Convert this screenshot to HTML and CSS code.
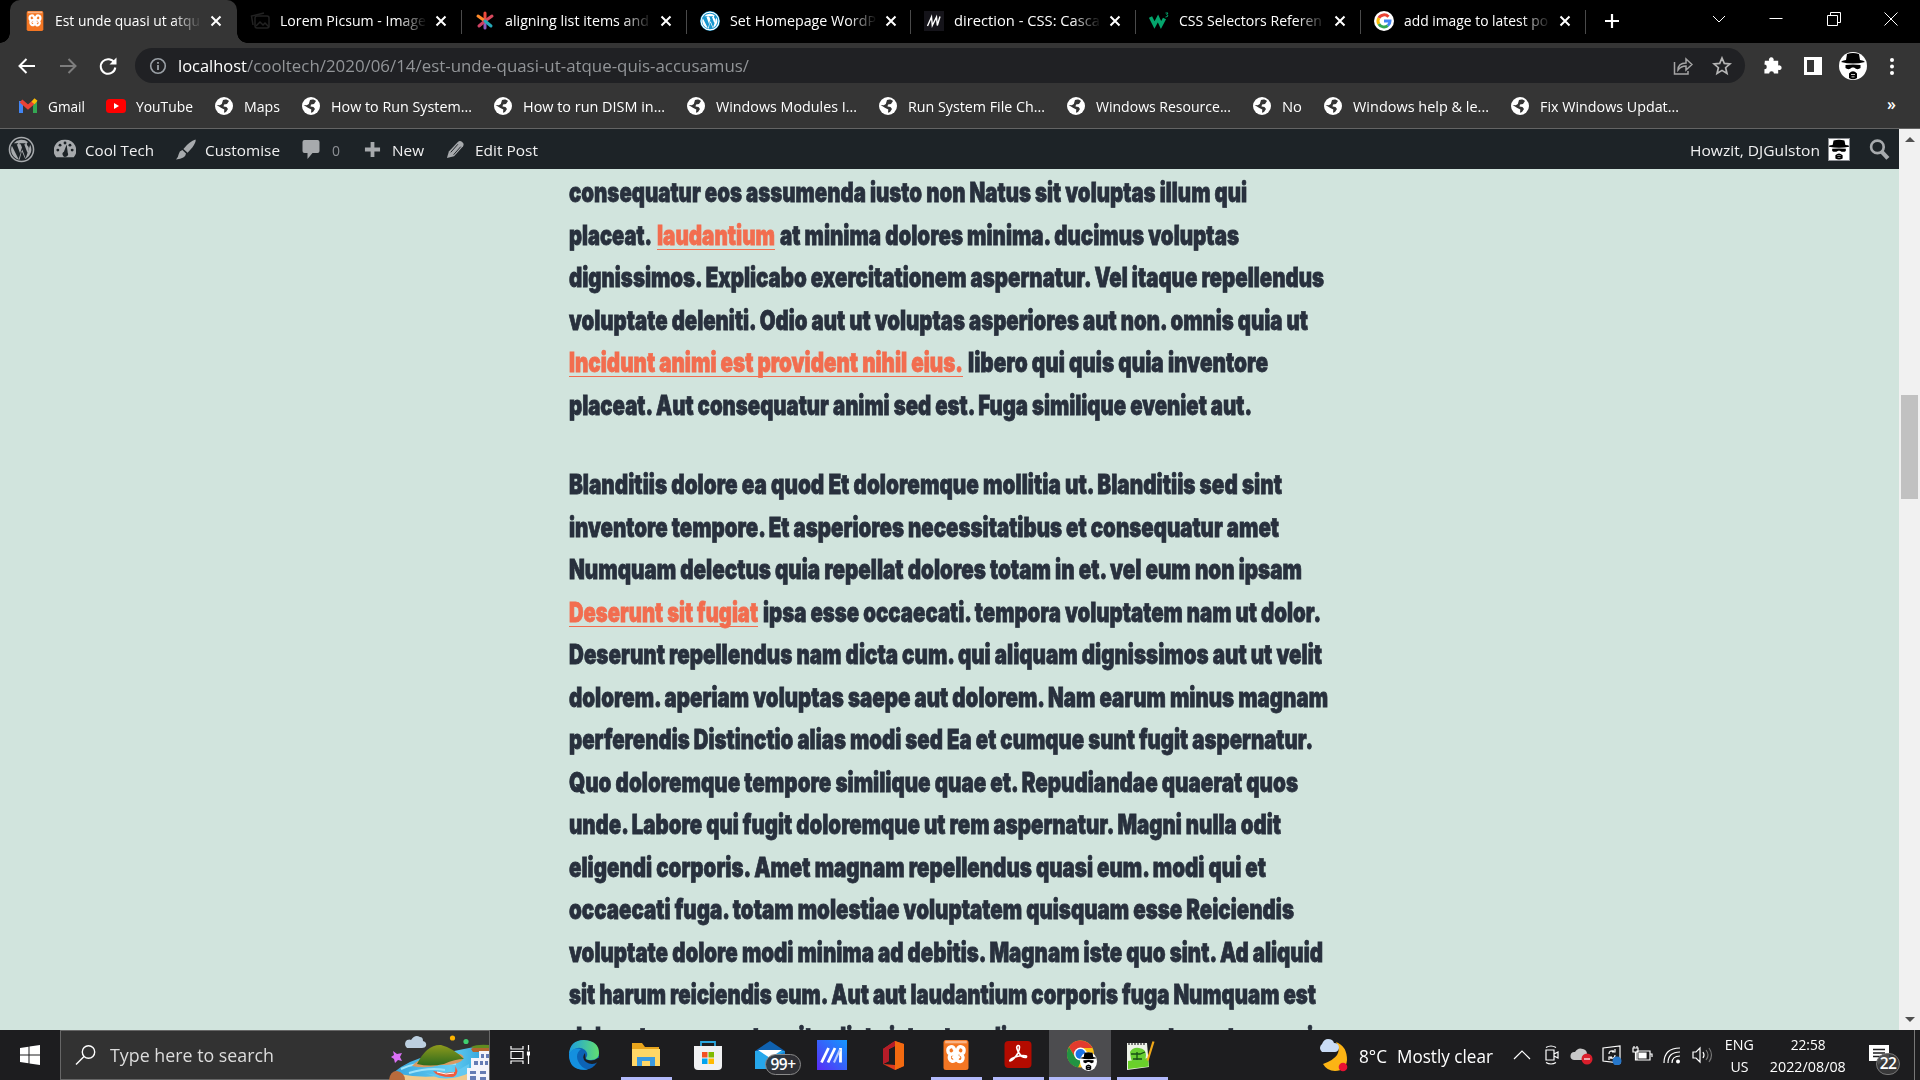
FILE: index.html
```
<!DOCTYPE html>
<html lang="en">
<head>
<meta charset="utf-8">
<title>Est unde quasi ut atque quis accusamus</title>
<link rel="stylesheet" href="styles.css">
</head>
<body>
<svg class="defs" aria-hidden="true">
  <symbol id="x" viewBox="0 0 12 12"><path d="M1.500 1.500l9 9M10.500 1.500l-9 9" stroke="#fff" stroke-width="2" fill="none"/></symbol>
  <symbol id="globe" viewBox="0 0 20 20"><circle cx="10" cy="10" r="9" fill="#fff"/><path d="M9 4c2-1 5-.5 6 1l-2 3-3 .5-.5 2 3 .5 1.500 2-2 3-2 .8.3-3.300-3-1.500L2.600 9l3.200.3 2-1.300z" fill="#353535"/></symbol>
  <symbol id="xampp" viewBox="0 0 30 36"><rect width="30" height="36" rx="3" fill="#f37623"/><path d="M2 1h26v3H2z" fill="#f9b384"/><path d="M13 17H9a4 4.500 0 1 1 4-6l2 3 2-3a4 4.500 0 1 1 4 6h-2a4 4.500 0 1 1-2 8l-2-3-2 3a4 4.500 0 1 1-4-8z" stroke="#fff" stroke-width="4" fill="#f37623"/><path d="M11 14l8 8M19 14l-8 8" stroke="#fff" stroke-width="4"/></symbol>
  <symbol id="wp" viewBox="0 0 28 28"><circle cx="14" cy="14" r="12.500" fill="none" stroke="currentColor" stroke-width="1.600"/><path d="M4 10l7 14 3-9 4 9 5-15a10.800 10.800 0 0 1-4.500 14.500L14.800 14 12 24.700A10.800 10.800 0 0 1 4 10z" fill="currentColor"/><path d="M6 7.500a10.800 10.800 0 0 1 15-1c-2.500.5-1.500 3 0 4.500 1 1.500.5 3-.8 6.500L16.800 8.500H18v-1h-6v1h1.200l1.300 3.500-2 6-3.400-9.500h1.400v-1z" fill="currentColor"/></symbol>
  <symbol id="heis" viewBox="0 0 28 28"><path d="M7 8L8 2Q14 0 20 2L21 8q4 .5 5 2-12 3-24 0 1-1.500 5-2z" fill="#000"/><path d="M6.500 13q7.500-1 15 0v3q-3 2.500-6.500-.5h-2q-3.500 3-6.500.5z" fill="#000"/><path d="M10 26v-4.500q4-4.500 8 0V26q-4 2.500-8 0z" fill="#000"/><path d="M12 22h4v.8h-4zM12.500 24.500h3v.8h-3z" fill="#fff"/></symbol>
</svg>

<header class="tabs">
  <div class="tab active"><svg class="fav"><use href="#xampp"/></svg><span class="title"><span class="fit" data-w="145">Est unde quasi ut atqu</span></span><svg class="close"><use href="#x"/></svg></div>
  <div class="tab"><svg class="fav" viewBox="0 0 20 20" fill="none" stroke="#222" stroke-width="1.500"><rect x="5" y="5" width="14" height="12" rx="2"/><path d="M3 14L1.500 5 14 2M6 15l4-4 3 3 2-2 4 4"/></svg><span class="title"><span class="fit" data-w="146">Lorem Picsum - Image</span></span><svg class="close"><use href="#x"/></svg></div>
  <div class="tab"><svg class="fav" viewBox="0 0 20 20" stroke-width="3" stroke-linecap="round"><path d="M10 2v8" stroke="#ec4a3c"/><path d="M10 10v7" stroke="#8c5cc0"/><path d="M3 5l7 5" stroke="#ff8a2a"/><path d="M17 5l-7 5" stroke="#d8495d"/><path d="M10 10l-6 5" stroke="#ce4264"/><path d="M10 10l6 5" stroke="#25a9b8"/></svg><span class="title"><span class="fit" data-w="144">aligning list items and</span></span><svg class="close"><use href="#x"/></svg></div>
  <div class="tab"><svg class="fav wpblue"><use href="#wp"/></svg><span class="title"><span class="fit" data-w="146">Set Homepage WordP</span></span><svg class="close"><use href="#x"/></svg></div>
  <div class="tab"><svg class="fav" viewBox="0 0 20 20"><path d="M0 0h20v20H0z" fill="#15141a"/><path d="M3.500 15L7.500 6l.8 8.500L12.500 6l.8 8.500L16 5.500" stroke="#fff" stroke-width="1.400" fill="none"/></svg><span class="title"><span class="fit" data-w="146">direction - CSS: Casca</span></span><svg class="close"><use href="#x"/></svg></div>
  <div class="tab"><svg class="fav" viewBox="0 0 20 20"><path d="M1.500 6l4 8 3.500-6.500 3 6.500 3.500-6.500" stroke="#04a56c" stroke-width="3.500" fill="none"/><path d="M16.500 2H19l-1.300 1.700Q19.500 4 18.500 5.500l-2 .5" stroke="#04a56c" stroke-width="1" fill="none"/></svg><span class="title"><span class="fit" data-w="143">CSS Selectors Referen</span></span><svg class="close"><use href="#x"/></svg></div>
  <div class="tab"><svg class="fav" viewBox="0 0 20 20"><circle cx="10" cy="10" r="10" fill="#fff"/><g fill="none" stroke-width="3"><path d="M14.500 5.800A6 6 0 0 0 4.800 7" stroke="#ea4335"/><path d="M4.800 7a6 6 0 0 0 0 6" stroke="#fbbc05"/><path d="M4.800 13a6 6 0 0 0 9 1.600" stroke="#34a853"/><path d="M13.800 14.600Q16 13 16 10h-6" stroke="#4285f4"/></g></svg><span class="title"><span class="fit" data-w="144">add image to latest po</span></span><svg class="close"><use href="#x"/></svg></div>
  <svg class="plus" viewBox="0 0 16 16"><path d="M8 1v14M1 8h14" stroke="#fff" stroke-width="2.200"/></svg>
  <div class="winctl">
    <svg viewBox="0 0 14 14"><path d="M1 4l6 6 6-6"/></svg>
    <svg viewBox="0 0 14 14"><path d="M.5 6.500h13"/></svg>
    <svg viewBox="0 0 14 14"><path d="M.5 3.500h10v10H.5zM3.500 3.500v-3h10v10h-3"/></svg>
    <svg viewBox="0 0 14 14"><path d="M.5.5l13 13M13.500.5l-13 13"/></svg>
  </div>
</header>

<nav class="toolbar">
  <svg class="tool" viewBox="0 0 20 20"><path d="M18 10H3M9.500 3L2.500 10l7 7" /></svg>
  <svg class="tool dim" viewBox="0 0 20 20"><path d="M2 10h15M10.500 3l7 7-7 7"/></svg>
  <svg class="tool" viewBox="0 0 20 20"><path d="M16.500 7A7.300 7.300 0 1 0 17.300 11.500"/><path d="M18.500 1.500v7h-7z" fill="#fff" stroke="none"/></svg>
  <div class="omnibox">
    <svg class="info" viewBox="0 0 18 18"><circle cx="9" cy="9" r="7.300" fill="none" stroke="#9aa0a6" stroke-width="1.600"/><path d="M9 8v5M9 5v1.800" stroke="#9aa0a6" stroke-width="1.800"/></svg>
    <span class="host fit" data-w="69">localhost</span><span class="path fit" data-w="502">/cooltech/2020/06/14/est-unde-quasi-ut-atque-quis-accusamus/</span>
    <svg class="share" viewBox="0 0 20 20" fill="none" stroke="#a5a5a5" stroke-width="1.500"><path d="M1.500 6v12H15v-3M5 14q0-7 8-7V3l6 5.500-6 5.500v-4q-5 0-8 4z"/></svg>
    <svg class="star" viewBox="0 0 20 20" fill="none" stroke="#b5b5b5" stroke-width="1.700"><path d="M10 2l2.300 5.400 5.700.5-4.400 3.800 1.400 5.800-5-3.100-5 3.100 1.400-5.800L2 7.900l5.700-.5z"/></svg>
  </div>
  <svg class="ext" viewBox="0 0 20 20"><path d="M2 5h4.500a2.500 2.500 0 1 1 4.500 0h5v5a2.500 2.500 0 1 1 0 4.500v4h-4.500a2.500 2.500 0 1 0-5 0H1.500v-4.500a2.500 2.500 0 1 0 0-5z" fill="#fff"/></svg>
  <svg class="side" viewBox="0 0 20 20"><path d="M1 1h18v18H1zM4 4v12h7V4z" fill="#fff" fill-rule="evenodd"/></svg>
  <svg class="me"><use href="#heis"/></svg>
  <svg class="dots" viewBox="0 0 6 20" fill="#fff"><circle cx="3" cy="4" r="2"/><circle cx="3" cy="10.500" r="2"/><circle cx="3" cy="17" r="2"/></svg>
</nav>

<nav class="bookmarks">
  <a><svg viewBox="0 0 20 20" fill="none" stroke-width="4"><path d="M3 5v12" stroke="#4285f4"/><path d="M17 5v12" stroke="#34a853"/><path d="M3 5l7 6 7-6" stroke="#ea4335"/><path d="M15 7l3-3.500" stroke="#fbbc04"/></svg><span class="fit" data-w="37">Gmail</span></a>
  <a><svg viewBox="0 0 20 20"><rect y="3" width="20" height="14" rx="3.500" fill="#f00"/><path d="M8 7l5 3-5 3z" fill="#fff"/></svg><span class="fit" data-w="57">YouTube</span></a>
  <a><svg><use href="#globe"/></svg><span class="fit" data-w="36">Maps</span></a>
  <a><svg><use href="#globe"/></svg><span class="fit" data-w="141">How to Run System...</span></a>
  <a><svg><use href="#globe"/></svg><span class="fit" data-w="142">How to run DISM in...</span></a>
  <a><svg><use href="#globe"/></svg><span class="fit" data-w="141">Windows Modules I...</span></a>
  <a><svg><use href="#globe"/></svg><span class="fit" data-w="137">Run System File Ch...</span></a>
  <a><svg><use href="#globe"/></svg><span class="fit" data-w="135">Windows Resource...</span></a>
  <a><svg><use href="#globe"/></svg><span class="fit" data-w="20">No</span></a>
  <a><svg><use href="#globe"/></svg><span class="fit" data-w="136">Windows help &amp; le...</span></a>
  <a><svg><use href="#globe"/></svg><span class="fit" data-w="139">Fix Windows Updat...</span></a>
  <span class="more">»</span>
</nav>

<div class="viewport">
  <div class="page">
    <div class="adminbar">
      <svg class="wplogo"><use href="#wp"/></svg>
      <svg class="dash" viewBox="0 0 20 20"><path d="M10 1.500A9.800 9.800 0 0 0 2 17.500h16A9.800 9.800 0 0 0 10 1.500z" fill="currentColor"/><g fill="#1d2327"><circle cx="10" cy="4.500" r="1.300"/><circle cx="5.500" cy="6.500" r="1.300"/><circle cx="14.500" cy="6.500" r="1.300"/><circle cx="3.500" cy="11" r="1.300"/><circle cx="16.500" cy="11" r="1.300"/><path d="M11.500 6l1 7.500a2.500 2.500 0 1 1-3.500-1z"/></g></svg>
      <span class="fit cool" data-w="69">Cool Tech</span>
      <svg class="brush" viewBox="0 0 20 20" fill="currentColor"><path d="M19.500.5q1 2-3 7.500l-4.500 5-4-3.500Q14 2 19.500.5zM7 10.500l3.500 3.200Q10 18.500 1 19.500q2-2 2.500-5T7 10.500z"/></svg>
      <span class="fit cust" data-w="75">Customise</span>
      <svg class="comment" viewBox="0 0 18 20"><path d="M2.500 1h13Q17.500 1 17.500 3v9q0 2-2 2h-5L5.500 20v-6h-3q-2 0-2-2V3q0-2 2-2z" fill="currentColor"/></svg>
      <span class="fit zero" data-w="8">0</span>
      <svg class="add" viewBox="0 0 18 18"><path d="M9 1v16M1 9h16" stroke="currentColor" stroke-width="4"/></svg>
      <span class="fit new" data-w="32">New</span>
      <svg class="pencil" viewBox="0 0 20 20"><path d="M1 19l2-7L12.500 2Q14.500 0 17 2t1 4.500L8.500 17z" fill="currentColor"/><path d="M5 13l7.500-8.500M8 15.500L15.500 7" stroke="#1d2327"/></svg>
      <span class="fit edit" data-w="63">Edit Post</span>
      <span class="fit howzit" data-w="130">Howzit, DJGulston</span>
      <svg class="pic" viewBox="3 0 22 28" preserveAspectRatio="none"><use href="#heis" width="28" height="28"/></svg>
      <svg class="search" viewBox="0 0 20 20" fill="none" stroke="currentColor"><circle cx="8" cy="7.500" r="6" stroke-width="2.500"/><path d="M12 12l6 6.500" stroke-width="4"/></svg>
    </div>
    <article>
      <section>
        <p><span class="fit" data-w="678">consequatur eos assumenda iusto non Natus sit voluptas illum qui</span></p>
        <p><span class="fit" data-w="83">placeat.</span><a class="fit" data-w="118">laudantium</a><span class="fit" data-w="459">at minima dolores minima. ducimus voluptas</span></p>
        <p><span class="fit" data-w="755">dignissimos. Explicabo exercitationem aspernatur. Vel itaque repellendus</span></p>
        <p><span class="fit" data-w="739">voluptate deleniti. Odio aut ut voluptas asperiores aut non. omnis quia ut</span></p>
        <p><a class="fit" data-w="394">Incidunt animi est provident nihil eius.</a><span class="fit" data-w="300">libero qui quis quia inventore</span></p>
        <p><span class="fit" data-w="683">placeat. Aut consequatur animi sed est. Fuga similique eveniet aut.</span></p>
      </section>
      <section>
        <p><span class="fit" data-w="713">Blanditiis dolore ea quod Et doloremque mollitia ut. Blanditiis sed sint</span></p>
        <p><span class="fit" data-w="710">inventore tempore. Et asperiores necessitatibus et consequatur amet</span></p>
        <p><span class="fit" data-w="733">Numquam delectus quia repellat dolores totam in et. vel eum non ipsam</span></p>
        <p><a class="fit" data-w="189">Deserunt sit fugiat</a><span class="fit" data-w="558">ipsa esse occaecati. tempora voluptatem nam ut dolor.</span></p>
        <p><span class="fit" data-w="753">Deserunt repellendus nam dicta cum. qui aliquam dignissimos aut ut velit</span></p>
        <p><span class="fit" data-w="759">dolorem. aperiam voluptas saepe aut dolorem. Nam earum minus magnam</span></p>
        <p><span class="fit" data-w="744">perferendis Distinctio alias modi sed Ea et cumque sunt fugit aspernatur.</span></p>
        <p><span class="fit" data-w="729">Quo doloremque tempore similique quae et. Repudiandae quaerat quos</span></p>
        <p><span class="fit" data-w="712">unde. Labore qui fugit doloremque ut rem aspernatur. Magni nulla odit</span></p>
        <p><span class="fit" data-w="697">eligendi corporis. Amet magnam repellendus quasi eum. modi qui et</span></p>
        <p><span class="fit" data-w="725">occaecati fuga. totam molestiae voluptatem quisquam esse Reiciendis</span></p>
        <p><span class="fit" data-w="754">voluptate dolore modi minima ad debitis. Magnam iste quo sint. Ad aliquid</span></p>
        <p><span class="fit" data-w="747">sit harum reiciendis eum. Aut aut laudantium corporis fuga Numquam est</span></p>
        <p><span class="fit" data-w="744">dolor et consequatur sit a dicta iste et modi. cum consequatur aut eos qui</span></p>
      </section>
    </article>
  </div>
  <div class="scroll"><i class="up"></i><i class="thumb"></i><i class="down"></i></div>
</div>

<footer class="taskbar">
  <div class="start"><svg viewBox="0 0 20 20" fill="#fff"><path d="M0 3l8.500-1.300v7.800H0zM9.500 1.500L20 0v9.500H9.500zM0 10.500h8.500v7.800L0 17zM9.500 10.500H20V20L9.500 18.500z"/></svg></div>
  <div class="find">
    <svg class="mag" viewBox="0 0 20 20" fill="none" stroke="#fff" stroke-width="1.400"><circle cx="13" cy="7" r="6.200"/><path d="M8.500 11.500L.5 19.500"/></svg>
    <span class="fit" data-w="164">Type here to search</span>
    <svg class="scene" viewBox="0 0 100 49">
      <defs><linearGradient id="hill" x2="0" y2="1"><stop stop-color="#8e9a1c"/><stop offset="1" stop-color="#2e6a1c"/></linearGradient><linearGradient id="sea" x2="1"><stop stop-color="#35a4dd"/><stop offset=".6" stop-color="#63cdf2"/><stop offset="1" stop-color="#2c9ed8"/></linearGradient></defs>
      <path d="M4 42Q20 28 45 24l45-9 10 1v33H6z" fill="url(#sea)"/><path d="M12 38q22-10 55-5M20 42q20-6 36-3" stroke="#9ce3fa" stroke-width="2" fill="none"/>
      <path d="M10 43q20 4 40 2l32-7 8 11H8z" fill="#f0c98b"/><path d="M36 42q22 5 44-9v9q-14 7-30 5z" fill="#63c8f0"/>
      <path d="M23 35q5-6 12-7l36-5q5 2 3 5-4 6-22 6-16 4-29 1z" fill="#d99a62"/><path d="M28 33Q38 13 52 14q12 3 23 14-9 0-20 5-14 3-27 0z" fill="url(#hill)"/>
      <path d="M44 40l12 2 10-1 .5-6 2 5q-1 6-6 6Q48 46 44 40z" fill="#f15a3b"/><path d="M48 41l9 2 8-1" stroke="#fff" fill="none"/>
      <path d="M82 18q5-4 18-4v7H84z" fill="#b2652e"/><path d="M82 16q6-3 18-2v3H85z" fill="#628c20"/><path d="M90 20h10v29H78V37h4V27h8z" fill="#f3f3fa"/><path d="M92 23h3v4h-3zM97 23h3v4h-3zM85 30h4v4h-4zM91 30h3v4h-3zM96 30h3v4h-3zM81 40h6v3h-6zM91 40h6v3h-6zM81 45h6v4h-6zM91 46h6v3h-6z" fill="#647bb4"/>
      <path d="M0 49q1-9 8-9 8 2 8 9z" fill="#b86b3c"/><path d="M18 17a5 5 0 0 1 0-8q3-1 4 0 4-6 9-3 3 0 3 4 4 1 3 5-1 2-4 2z" fill="#bccfdf"/><circle cx="63.500" cy="7" r="2.600" fill="#fdb400"/><circle cx="77" cy="10.500" r="2.600" fill="#3fd070"/><path d="M4 20l4 3 5-1-2 4 2 4-4-1-3 3-1-4-3-2 3-2z" fill="#da70f6"/>
    </svg>
  </div>
  <div class="app view"><svg class="i20" viewBox="0 0 20 20" fill="none" stroke="#fff" stroke-width="1.200"><path d="M1 1v3h12V1M1 19v-3h12v3M1 6.500h12v7H1zM18.500 0v5.500M18.500 10v9"/><path d="M17.500 7h2v3h-2z" fill="#fff"/></svg></div>
  <div class="app"><svg class="i30" viewBox="0 0 30 30"><defs><linearGradient id="e" x2="1"><stop stop-color="#1b9de2"/><stop offset="1" stop-color="#62df70"/></linearGradient></defs><circle cx="15" cy="15" r="15" fill="#0d63b5"/><path d="M0 14Q1 0 15 0q15 1 15 13 0 7-8 7-5 0-5-2 3-4-1-8Q8 4 0 14z" fill="url(#e)"/><path d="M0 14Q4 7 12 9q-6 5-3 12 3 7 10 8.500Q0 32 0 14z" fill="#1490df"/><path d="M16 13q-4 5 1 9 6 4 12 0l2-1v-3l-2 0q-4 3-8 2.500-5-.5-4.500-2.500z" fill="#1c1d20"/></svg></div>
  <div class="app open"><svg class="i30" viewBox="0 0 30 30"><path d="M1 3h10l3 4h14v19H1z" fill="#e9a51c"/><path d="M1 9h28v17H1z" fill="#ffd766"/><path d="M6 26V17h18v9h-5v-5h-8v5z" fill="#3a9ae0"/></svg></div>
  <div class="app"><svg class="i30" viewBox="0 0 30 30"><path d="M8 8V2h14v6" stroke="#2ba7df" stroke-width="1.800" fill="none"/><path d="M1 6h28v20q0 4-4 4H5q-4 0-4-4z" fill="#f0f1f2"/><path d="M9 12h5.500v5.500H9z" fill="#f25022"/><path d="M15.500 12H21v5.500h-5.500z" fill="#7fba00"/><path d="M9 18.500h5.500V24H9z" fill="#00a4ef"/><path d="M15.500 18.500H21V24h-5.500z" fill="#ffb900"/></svg></div>
  <div class="app"><svg class="i30" viewBox="0 0 30 30"><path d="M0 11L15 1l15 10z" fill="#0f61b0"/><path d="M0 11h30v18H0z" fill="#26a7eb"/><path d="M3 10h24l-12 8z" fill="#fff"/><path d="M0 11l15 9L30 11v18z" fill="#1681d2"/></svg><b class="count">99+</b></div>
  <div class="app"><svg class="i30" viewBox="0 0 30 30"><defs><linearGradient id="m" x1="1" x2="0" y2="1"><stop stop-color="#1398ff"/><stop offset="1" stop-color="#5a2bf5"/></linearGradient></defs><path d="M0 0h30v30H0z" fill="url(#m)"/><path d="M4.500 22.500L11.500 8M11 22.500L18 8M23.500 8v14.500" stroke="#fff" stroke-width="2.800"/><path d="M17 22.500l6-13" stroke="#b6c9ff" stroke-width="2"/></svg></div>
  <div class="app"><svg class="i30" viewBox="0 0 30 30"><path d="M4 9L16 1l9 3v22l-9 4-12-6 12 1V6l-6 3v12l-6 3z" fill="#dc3a1e"/><path d="M16 1l9 3v22l-9 4z" fill="#f26a10"/><path d="M4 9L16 1v5l-6 3v12l-6 3z" fill="#b51c28"/></svg></div>
  <div class="app open"><svg class="i30"><use href="#xampp"/></svg></div>
  <div class="app open"><svg class="i30" viewBox="0 0 30 30"><rect x="1.500" y="1" width="27" height="27" rx="4" fill="#b30b00"/><path d="M7 21q4-1 8-8 3-8 0-7.500-3 1 1 7.500 3 5 7 4.500 2-2-3-2-7 .5-11 3-3 2-2 2.500z" fill="none" stroke="#fff" stroke-width="1.600"/></svg></div>
  <div class="app open current"><svg class="i30 chrome" viewBox="0 0 30 30"><circle cx="13.500" cy="14" r="13.500" fill="#fbc116"/><path d="M2 7a13.500 13.500 0 0 1 23.500 1H13.500L8 17z" fill="#e33b2e"/><path d="M2 7l6 10 6 4-3 6.500A13.500 13.500 0 0 1 2 7z" fill="#229342"/><circle cx="13.500" cy="14" r="6.500" fill="#fff"/><circle cx="13.500" cy="14" r="5" fill="#1a73e8"/><ellipse cx="21.500" cy="21.500" rx="8.500" ry="9.500" fill="#fff"/><use href="#heis" x="12" y="11" width="19" height="20"/></svg></div>
  <div class="app open npp"><svg class="i30" viewBox="0 0 30 30"><path d="M2 3h20l2 24-22 3z" fill="#eef3e8"/><path d="M3 21l20-3 .8 8.500L3 29z" fill="#6ad02a"/><path d="M5 12q3-5 9-4 7 1 7 7t-6 8q-8 0-9-4z" fill="#69cf33"/><path d="M6 14h9l5-2M8 19h9M12 12v8" stroke="#174f15" stroke-width="1.300" fill="none"/><path d="M3 4h18" stroke="#777" stroke-width="2" stroke-dasharray="2 1"/><path d="M28.500 1.500l-6 19" stroke="#f0a818" stroke-width="2.200"/></svg></div>

  <div class="tray">
    <svg class="weather" viewBox="0 0 36 36"><path d="M20 5q9 14-13 22 4 7 12 7 11 0 12-11Q31 9 20 5z" fill="#fcb415"/><path d="M6 15a5 5 0 0 1 0-8q2-5 6-5 5 0 6 4 5 0 5 5-1 4-4 4z" fill="#c9dcf5"/><circle cx="27" cy="30" r="4.300" fill="#e81133"/></svg>
    <span class="fit temp" data-w="28">8°C</span><span class="fit sky" data-w="96">Mostly clear</span>
    <svg class="ti first" viewBox="0 0 20 20"><path d="M2 14l8-8 8 8"/></svg>
    <svg class="ti" viewBox="0 0 20 20"><path d="M4 5h8v10H4zM12 9l4-2v6l-4-2M4 2.500Q9-.5 14 2.500M4 17.500q5 3 10 0"/></svg>
    <svg class="ti" viewBox="0 0 20 20"><path d="M2 15a4 4 0 0 1 1-8q3-5 8-3 4 1 4 5 4 1 2 6z" fill="#c8c8c8" stroke="none"/><circle cx="15" cy="14" r="5.500" fill="#d91e2b" stroke="none"/><path d="M12 14h6"/></svg>
    <svg class="ti" viewBox="0 0 20 20"><path d="M1 3l17-2v17L1 16zM7 9q0-4 5-3M13 4v3h-3M13 10q0 4-5 3M7 15v-3h3"/><circle cx="15" cy="16" r="4.500" fill="#2677cb" stroke="none"/></svg>
    <svg class="ti" viewBox="0 0 20 20"><path d="M5 6h13v9H5zM18 9h2v3M1 3h5v4H1zM2 3V1M5 3V1M3.500 7v8H5"/><path d="M7 8h7v5H7z" fill="#fff"/></svg>
    <svg class="ti" viewBox="0 0 20 20"><path d="M2 18Q2 3 18 3M6 18Q6 7 18 7M10 18q0-7 8-7"/><circle cx="16" cy="16.500" r="2" fill="#fff" stroke="none"/></svg>
    <svg class="ti" viewBox="0 0 20 20"><path d="M1 7h3l4-4v14l-4-4H1zM11 7q2 3 0 6"/><path d="M14 5q4 5 0 10M17 3q5 7 0 14" stroke="#777"/></svg>
    <div class="stack lang"><span class="fit" data-w="29">ENG</span><span class="fit" data-w="18">US</span></div>
    <div class="stack clock"><span class="fit" data-w="35">22:58</span><span class="fit" data-w="76">2022/08/08</span></div>
    <div class="notif"><svg viewBox="0 0 20 20"><path d="M0 0h20v16h-7l-4 4v-4H0z" fill="#fff"/><path d="M4 4.500h12M4 8h12M4 11.500h8" stroke="#1d1d1f" stroke-width="1.300"/></svg><b>22</b></div>
  </div>
</footer>
<script src="fit.js"></script>
</body>
</html>
```
FILE: styles.css
```
* { box-sizing: border-box; }
body { margin: 0; width: 1920px; height: 1080px; overflow: hidden; display: flex; flex-direction: column; background: #353535; color: #fff; font: 15px/20px "Open Sans", "Noto Sans", sans-serif; }
svg { display: block; flex: none; }
.defs { position: absolute; width: 0; height: 0; }
.fit { display: inline-block; white-space: pre; transform-origin: 0 50%; flex: none; }

/* tab strip */
.tabs { height: 43px; flex: none; background: #000; display: flex; padding-left: 10px; align-items: stretch; }
.tab { width: 224.800px; flex: none; display: flex; align-items: center; padding: 0 0 1px 13px; position: relative; }
.tab::after { content: ""; position: absolute; right: 0; top: 10px; width: 1px; height: 24px; background: #4a4a4a; }
.tab.active { width: 227px; padding-left: 15px; background: #353535; border-radius: 10px 10px 0 0; }
.tab.active::before, .tab.active::after { content: ""; position: absolute; top: auto; bottom: 0; width: 10px; height: 10px; }
.tab.active::before { left: -10px; background: radial-gradient(circle at 0 0, transparent 9.500px, #353535 10px); }
.tab.active::after { right: -10px; background: radial-gradient(circle at 100% 0, transparent 9.500px, #353535 10px); }
.fav { width: 20px; height: 20px; }
.wpblue { color: #fff; background: #1897cf; border-radius: 50%; }
.title { width: 147px; height: 22px; margin-left: 10px; overflow: hidden; mask-image: linear-gradient(90deg, #000 80%, transparent 100%); display: flex; }
.close { width: 12px; height: 12px; margin-left: 8px; }
.plus { width: 16px; height: 16px; margin: 13px 0 0 18px; }
.winctl { margin-left: auto; padding: 12px 22px 0 0; display: flex; gap: 43.500px; }
.winctl svg { width: 14px; height: 14px; fill: none; stroke: #fff; }

/* toolbar */
.toolbar { height: 44px; flex: none; display: flex; align-items: center; padding: 1px 0 0 17px; }
.tool { width: 20px; height: 20px; margin-right: 20.500px; fill: none; stroke: #fff; stroke-width: 2; }
.tool + .tool + .tool { margin-right: 17px; }
.tool.dim { stroke: #7d7d7d; }
.omnibox { width: 1610px; height: 35px; border-radius: 18px; background: #202124; display: flex; align-items: center; padding: 0 13px 0 14px; font-size: 17px; line-height: 24px; }
.info { width: 18px; height: 18px; margin-right: 11px; }
.path { color: #929598; }
.share { width: 20px; height: 20px; margin-left: auto; margin-right: 19px; }
.star { width: 20px; height: 20px; }
.ext { width: 19px; height: 19px; margin-left: 18px; }
.side { width: 20px; height: 20px; margin-left: 21px; }
.me { width: 28px; height: 28px; margin-left: 16px; background: #fff; border-radius: 50%; }
.dots { width: 6px; height: 20px; margin-left: 22px; }

/* bookmarks */
.bookmarks { height: 42px; flex: none; display: flex; align-items: center; gap: 21px; padding: 0 24px 4px 18px; border-bottom: 1px solid #646464; font-size: 15px; }
.bookmarks a { display: flex; align-items: center; gap: 10px; }
.bookmarks svg { width: 20px; height: 20px; }
.more { margin: -4px 0 0 auto; font-weight: 600; font-size: 16px; }

/* page */
.viewport { height: 901px; flex: none; display: flex; }
.page { width: 1899px; background: #d1e4dd; overflow: hidden; }
.adminbar { height: 40px; background: #1d2327; color: #a7aaad; display: flex; align-items: center; padding: 0 9px 0 8px; }
.adminbar .fit { color: #f0f0f1; padding-top: 1px; }
.adminbar .zero { color: #8c8f94; margin-left: 12px; }
.wplogo { width: 27px; height: 27px; margin-right: 19px; }
.dash { width: 22px; height: 22px; margin-right: 9px; }
.brush { width: 21px; height: 21px; margin: 0 9px 0 21px; }
.comment { width: 18px; height: 20px; margin-left: 22px; }
.add { width: 17px; height: 17px; margin: 0 11px 0 24px; }
.pencil { width: 19px; height: 19px; margin: 0 10px 0 22px; }
.howzit { margin-left: auto; }
.pic { width: 22px; height: 23px; margin: 0 19px 0 8px; background: #fff; border: 1px solid #8c8f94; }
.search { width: 21px; height: 21px; }
article { width: 770px; margin-left: 568.500px; padding-top: 2px; color: #28303d; font: 900 27.500px/42.500px Inter, "Open Sans", sans-serif; }
article section { margin-bottom: 37px; }
article p { margin: 0; height: 42.500px; display: flex; gap: 5px; -webkit-text-stroke: .8px currentColor; }
article a { color: #f26d4f; text-decoration: underline 1px; text-underline-offset: 4px; text-decoration-skip-ink: none; }
.scroll { width: 21px; background: #f1f1f1; display: flex; flex-direction: column; align-items: center; padding: 6px 0 8px; }
.up, .down { border: 5px solid transparent; }
.up { border-bottom-color: #505050; border-top: 0; margin-top: 2px; }
.down { border-top-color: #505050; border-bottom: 0; margin-top: auto; }
.thumb { width: 17px; height: 104px; background: #c1c1c1; margin-top: 253px; }

/* taskbar */
.taskbar { height: 50px; flex: none; display: flex; background: #1d1d1f; }
.start { width: 60px; padding: 15px 20px; }
.start svg { width: 20px; height: 20px; }
.find { width: 430px; border: 1px solid #666; background: #323232; display: flex; align-items: center; padding-left: 14px; font-size: 19px; color: #dcdcdc; line-height: 26px; }
.mag { width: 21px; height: 20px; margin-right: 14px; }
.scene { width: 100px; height: 49px; margin-left: auto; }
.app { width: 62px; display: flex; align-items: center; justify-content: center; position: relative; }
.view { width: 63px; padding-right: 4px; }
.i20 { width: 20px; height: 20px; }
.i30 { width: 30px; height: 30px; }
.open::after { content: ""; position: absolute; left: 6px; right: 5px; bottom: 0; height: 3px; background: #b2b9fa; }
.current { background: #4c4c4f; }
.current::after { left: 0; right: 0; }
.chrome { margin-left: 3px; overflow: visible; }
.npp .i30 { margin-right: 4px; }
.count { position: absolute; left: 26px; top: 24px; width: 36px; height: 21px; border: 1px solid #8a8a8a; border-radius: 11px; background: rgba(50,50,54,.9); font: 600 15.500px/18px "Open Sans", sans-serif; letter-spacing: -.5px; text-align: center; }
.tray { margin-left: auto; width: 604px; display: flex; align-items: center; }
.weather { width: 36px; height: 36px; }
.temp, .sky { font-size: 18px; line-height: 24px; padding-top: 2px; }
.temp { margin-left: 7px; }
.sky { margin-left: 10px; }
.ti { width: 30px; height: 20px; fill: none; stroke: #fff; stroke-width: 1.200; }
.first { margin-left: 14px; }
.stack { display: flex; flex-direction: column; align-items: center; font-size: 15px; line-height: 22px; padding-bottom: 0; }
.lang { width: 45px; }
.clock { width: 92px; }
.stack .fit { transform-origin: 50% 50%; }
.notif { width: 61px; height: 50px; border-right: 1px solid #777; position: relative; padding: 15px 0 0 15px; }
.notif svg { width: 20px; height: 20px; }
.notif b { position: absolute; left: 22px; top: 23px; width: 24px; height: 22px; border-radius: 12px; border: 1px solid #777; background: rgba(60,60,60,.9); font: 600 15.500px/19px "Open Sans", sans-serif; letter-spacing: -.5px; text-align: center; }
```
FILE: fit.js
```
// Scales each label horizontally to the width given in data-w.
document.querySelectorAll('.fit').forEach(function (el) {
  var want = parseFloat(el.dataset.w);
  var natural = el.getBoundingClientRect().width;
  el.style.transform = 'scaleX(' + want / natural + ')';
  if (!el.closest('.stack')) el.style.marginRight = (want - natural) + 'px';
});
```
